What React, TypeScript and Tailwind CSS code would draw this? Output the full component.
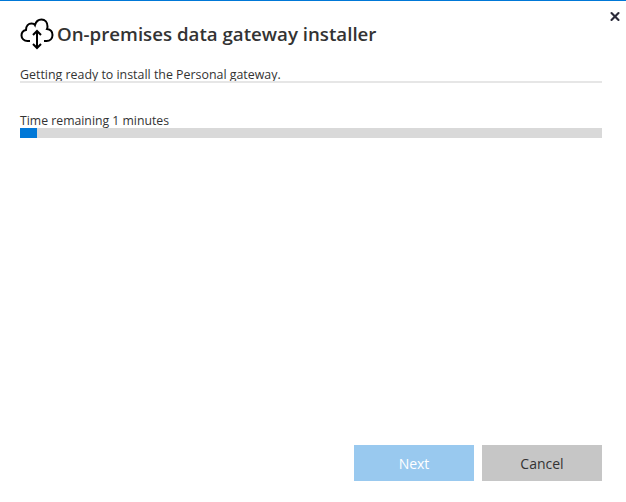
import {X} from 'lucide-react'

const CloudIcon = () => (
  <svg width="34" height="32" viewBox="0 0 34 32" fill="none" stroke="#000" strokeWidth="2" className="shrink-0">
    <path d="M10 23H7.500C4 23 1.500 20.500 1.500 17.500C1.500 14.500 3.500 12.500 6 12C6 8 8.500 5.500 11.500 5.500C13 5.500 14.500 6 15 7C16 3.500 18.500 1.500 21.500 1.500C25 1.500 27.500 4.500 27.500 8.500C27.500 9.500 27.500 10 27 11C30.500 11.500 32.500 14 32.500 17C32.500 20.500 30 23 26.500 23H24" />
    <path d="M17 13V30M13 17L17 13L21 17M13 26L17 30L21 26" />
  </svg>
)

const App = () => {
  return (
    <div className="w-[626px] h-[502px] bg-white border-t border-[#0078d7] flex flex-col relative font-['Open_Sans','Noto_Sans',sans-serif] text-[#333] overflow-hidden">
      <button className="absolute top-[8px] right-[4px] w-[14px] h-[14px] flex items-center justify-center">
        <X size={15} strokeWidth={3.6} color="#2b2b3a" />
      </button>
      <div className="flex flex-col pl-[20px] pr-[24px] grow">
        <div className="flex items-center mt-[17px] h-[32px]">
          <CloudIcon />
          <span className="text-[18.7px] leading-[32px] font-semibold ml-[3px] whitespace-nowrap">On-premises data gateway installer</span>
        </div>
        <div className="mt-[16px] text-[12.4px] leading-[17px] text-[#333] whitespace-nowrap">Getting ready to install the Personal gateway.</div>
        <div className="h-[2px] bg-[#e6e6e6] mt-[-2px]" />
        <div className="mt-[29px] text-[12.25px] leading-[17px] text-[#333] whitespace-nowrap">Time remaining 1 minutes</div>
        <div className="h-[10px] bg-[#d9d9d9] mt-[-1px]">
          <div className="h-full w-[17px] bg-[#0078d7]" />
        </div>
        <div className="mt-auto mb-[21px] flex justify-end gap-[8px]">
          <button className="w-[120px] h-[36px] bg-[#99c9ef] text-white text-[14px]">Next</button>
          <button className="w-[120px] h-[36px] bg-[#c6c6c6] text-[#333] text-[14px]">Cancel</button>
        </div>
      </div>
    </div>
  )
}

export default App
